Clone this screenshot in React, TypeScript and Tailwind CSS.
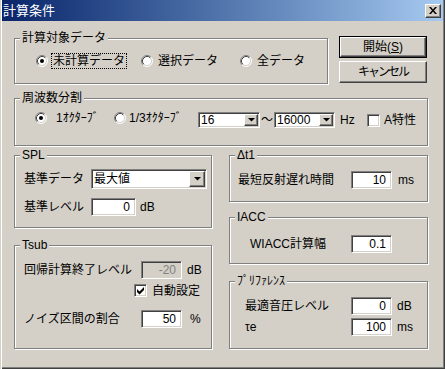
import type { ReactNode } from 'react'

const sunken =
  'border border-t-[#808080] border-l-[#808080] border-b-white border-r-white shadow-[inset_1px_1px_0_#404040,inset_-1px_-1px_0_#d4d0c8]'
const raised =
  'border border-t-white border-l-white border-b-[#404040] border-r-[#404040] shadow-[inset_-1px_-1px_0_#808080] bg-[#d4d0c8]'

function Radio({ checked }: { checked?: boolean }) {
  return (
    <svg width="12" height="12" viewBox="0 0 12 12" className="shrink-0">
      <circle cx="6" cy="6" r="5" fill="#fff" />
      <path d="M2.11 9.89A5.5 5.5 0 0 1 9.89 2.11" fill="none" stroke="#808080" />
      <path d="M9.89 2.11A5.5 5.5 0 0 1 2.11 9.89" fill="none" stroke="#fff" />
      <path d="M2.82 9.18A4.5 4.5 0 0 1 9.18 2.82" fill="none" stroke="#404040" />
      <path d="M9.18 2.82A4.5 4.5 0 0 1 2.82 9.18" fill="none" stroke="#d4d0c8" />
      {checked && <circle cx="6" cy="6" r="2" fill="#000" />}
    </svg>
  )
}

function Checkbox({ checked }: { checked?: boolean }) {
  return (
    <span className={`flex h-[13px] w-[13px] shrink-0 items-center justify-center bg-white ${sunken}`}>
      {checked && (
        <svg width="7" height="8" viewBox="0 0 7 8">
          <path d="M0 2L2.5 4.5L7 0V3L2.5 7.5L0 5Z" fill="#000" />
        </svg>
      )}
    </span>
  )
}

function Arrow() {
  return (
    <svg width="7" height="4" viewBox="0 0 7 4">
      <path d="M0 0H7L3.5 3.5Z" fill="#000" />
    </svg>
  )
}

function Combo({ value, className, btn }: { value: string; className: string; btn: string }) {
  return (
    <div className={`flex bg-white p-[1px] ${sunken} ${className}`}>
      <span className="flex flex-1 items-center pl-[1px]">{value}</span>
      <span className={`flex items-center justify-center ${raised} ${btn}`}>
        <Arrow />
      </span>
    </div>
  )
}

function Field({ value, className, disabled }: { value: string; className: string; disabled?: boolean }) {
  return (
    <div
      className={`flex h-[18px] items-center justify-end pr-[5px] ${sunken} ${className} ${
        disabled ? 'bg-[#d4d0c8] text-[#808080]' : 'bg-white'
      }`}
    >
      {value}
    </div>
  )
}

function Group({ label, className, children }: { label: string; className: string; children?: ReactNode }) {
  return (
    <div className={`relative border border-[#808080] shadow-[inset_1px_1px_0_#fff,1px_1px_0_#fff] ${className}`}>
      <span className="absolute -top-[7px] left-[5px] bg-[#d4d0c8] px-[2px]">{label}</span>
      {children}
    </div>
  )
}

export default function App() {
  return (
    <div className="h-[369px] w-[445px] overflow-hidden bg-[#d4d0c8] px-[2px] text-[12px] leading-[12px] text-black shadow-[inset_1px_0_0_#d4d0c8,inset_2px_0_0_#fff,inset_-1px_-1px_0_#404040,inset_-2px_-2px_0_#808080] [font-family:'Liberation_Sans','Noto_Sans_CJK_JP',sans-serif]">
      <div className="flex h-[21px] items-center justify-between bg-linear-to-r from-[#0a246a] to-[#a6caf0] pl-[1px] pr-[2px]">
        <span className="text-[13px] leading-[13px] text-white">計算条件</span>
        <span className={`flex h-[14px] w-[16px] items-center justify-center ${raised}`}>
          <svg width="8" height="7" viewBox="0 0 8 7">
            <path d="M0 0H2L4 2.4L6 0H8L5 3.5L8 7H6L4 4.6L2 7H0L3 3.5Z" fill="#000" />
          </svg>
        </span>
      </div>

      <div className="pl-[12px] pt-[17px]">
        <div className="flex">
          <Group label="計算対象データ" className="flex h-[46px] w-[314px] items-center">
            <div className="ml-[21px] flex w-[105px] items-center">
              <Radio checked />
              <span className="ml-[3px] flex h-[16px] items-center border border-dotted border-black px-[1px]">
                未計算データ
              </span>
            </div>
            <div className="flex w-[99px] items-center">
              <Radio />
              <span className="ml-[4px] px-[1px]">選択データ</span>
            </div>
            <div className="flex items-center">
              <Radio />
              <span className="ml-[4px] px-[1px]">全データ</span>
            </div>
          </Group>
          <div className="-mt-[2px] ml-[11px] flex flex-col gap-[3px]">
            <div className="border border-black">
              <div className={`flex h-[20px] w-[86px] items-center justify-center ${raised}`}>
                開始(<span className="underline">S</span>)
              </div>
            </div>
            <div className={`flex h-[22px] w-[88px] items-center justify-center tracking-[-2px] ${raised}`}>
              キャンセル
            </div>
          </div>
        </div>

        <Group label="周波数分割" className="mt-[14px] flex h-[48px] w-[414px] items-start pt-[13px]">
          <div className="ml-[20px] flex w-[79px] items-center">
            <Radio checked />
            <span className="ml-[9px]">1ｵｸﾀｰﾌﾞ</span>
          </div>
          <div className="flex w-[84px] items-center">
            <Radio />
            <span className="ml-[3px]">1/3ｵｸﾀｰﾌﾞ</span>
          </div>
          <Combo value="16" className="h-[16px] w-[62px]" btn="w-[14px]" />
          <span className="flex h-[16px] w-[14px] items-center justify-center">～</span>
          <Combo value="16000" className="h-[16px] w-[61px]" btn="w-[14px]" />
          <span className="ml-[5px] flex h-[16px] w-[27px] items-center">Hz</span>
          <div className="flex h-[16px] items-center">
            <Checkbox />
            <span className="ml-[4px]">A特性</span>
          </div>
        </Group>

        <div className="mt-[9px] flex gap-[17px]">
          <div className="flex flex-col gap-[17px]">
            <Group label="SPL" className="h-[73px] w-[198px] pt-[13px]">
              <div className="flex items-center">
                <span className="ml-[9px] w-[67px]">基準データ</span>
                <Combo value="最大値" className="h-[20px] w-[116px]" btn="w-[16px]" />
              </div>
              <div className="mt-[9px] flex items-center">
                <span className="ml-[9px] w-[67px]">基準レベル</span>
                <Field value="0" className="w-[45px]" />
                <span className="ml-[4px]">dB</span>
              </div>
            </Group>
            <Group label="Tsub" className="h-[104px] w-[198px] pt-[15px]">
              <div className="flex items-center">
                <span className="ml-[9px] w-[117px]">回帰計算終了レベル</span>
                <Field value="-20" className="w-[41px]" disabled />
                <span className="ml-[5px]">dB</span>
              </div>
              <div className="ml-[119px] mt-[5px] flex items-center">
                <Checkbox checked />
                <span className="ml-[5px]">自動設定</span>
              </div>
              <div className="mt-[13px] flex items-center">
                <span className="ml-[9px] w-[117px]">ノイズ区間の割合</span>
                <Field value="50" className="w-[41px]" />
                <span className="ml-[8px]">%</span>
              </div>
            </Group>
          </div>

          <div className="flex flex-col">
            <Group label="Δt1" className="h-[47px] w-[199px] pt-[15px]">
              <div className="flex items-center">
                <span className="ml-[8px] w-[113px]">最短反射遅れ時間</span>
                <Field value="10" className="w-[41px]" />
                <span className="ml-[6px]">ms</span>
              </div>
            </Group>
            <Group label="IACC" className="mt-[15px] h-[47px] w-[199px] pt-[17px]">
              <div className="flex items-center">
                <span className="ml-[20px] w-[101px]">WIACC計算幅</span>
                <Field value="0.1" className="w-[41px]" />
              </div>
            </Group>
            <Group label="ﾌﾟﾘﾌｧﾚﾝｽ" className="mt-[17px] h-[68px] w-[199px] pt-[15px]">
              <div className="flex items-center">
                <span className="ml-[15px] w-[106px]">最適音圧レベル</span>
                <Field value="0" className="w-[41px]" />
                <span className="ml-[5px]">dB</span>
              </div>
              <div className="mt-[3px] flex items-center">
                <span className="ml-[15px] w-[106px]">τe</span>
                <Field value="100" className="w-[41px]" />
                <span className="ml-[5px]">ms</span>
              </div>
            </Group>
          </div>
        </div>
      </div>
    </div>
  )
}
